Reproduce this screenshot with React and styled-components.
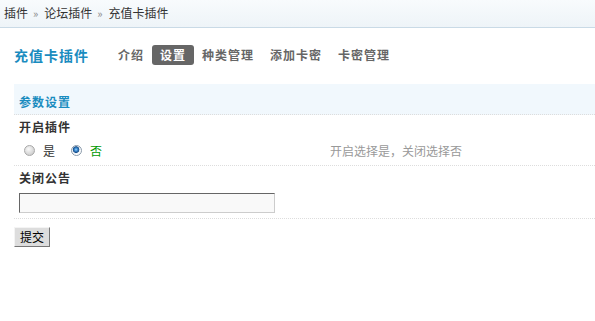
import React from "react";
import styled, { createGlobalStyle } from "styled-components";

const Global = createGlobalStyle`
  html, body { margin: 0; padding: 0; background: #fff; }
  body {
    font-family: "Noto Sans CJK SC", "Liberation Sans", sans-serif;
    font-size: 12px;
    color: #333;
  }
`;

const TopBar = styled.div`
  height: 27px;
  line-height: 26px;
  padding-left: 4px;
  background: linear-gradient(#f8fbfd, #eef4f8);
  border-bottom: 1px solid #c9dae6;
  color: #333;
  font-size: 12px;
`;

const Sep = styled.span`
  color: #888;
  margin: 0 6px 0 5px;
  font-size: 11px;
`;

const Header = styled.div`
  display: flex;
  align-items: center;
  margin: 17px 0 0 14px;
  height: 20px;
`;

const Title = styled.h3`
  margin: 0 21px 0 0;
  font-size: 14px;
  font-weight: 700;
  letter-spacing: 1px;
  color: #1a8cbf;
  line-height: 20px;
`;

const Nav = styled.div`
  display: flex;
  gap: 0;
`;

const NavItem = styled.a`
  display: block;
  height: 20px;
  line-height: 20px;
  padding: 0 8px;
  border-radius: 3px;
  font-size: 12px;
  font-weight: 700;
  letter-spacing: 1px;
  text-decoration: none;
  color: ${(p) => (p.$active ? "#fff" : "#666")};
  background: ${(p) => (p.$active ? "#666" : "transparent")};
`;

const Form = styled.div`
  margin: 19px 0 0 14px;
`;

const Partition = styled.div`
  background: #f1f8fd;
  color: #1a8cbf;
  font-weight: 700;
  letter-spacing: 1px;
  padding: 10px 5px 5px;
  line-height: 15px;
  border-bottom: 1px dotted #ddd;
`;

const ItemTitle = styled.div`
  padding: 3px 5px 0;
  line-height: 18px;
  font-weight: 700;
  letter-spacing: 1px;
  color: #333;
`;

const Row = styled.div`
  display: grid;
  grid-template-columns: 311px 1fr;
  align-items: center;
  border-bottom: 1px dotted #ddd;
  padding: ${(p) => p.$pad || "2px 0"};
`;

const Cell = styled.div`
  padding: 0 5px;
  display: flex;
  align-items: center;
  min-height: 20px;
`;

const Tip = styled.div`
  padding: 2px 5px 0;
  color: #999;
  line-height: 18px;
`;

const Choice = styled.label`
  display: inline-flex;
  align-items: center;
  margin-right: 11px;
  color: ${(p) => (p.$on ? "#090" : "#333")};
`;

const Radio = styled.span`
  width: 11px;
  height: 11px;
  box-sizing: border-box;
  margin: 0 8px 0 5px;
  border-radius: 50%;
  border: 1px solid ${(p) => (p.$checked ? "#8a9aaa" : "#a8a8a8")};
  background: ${(p) =>
    p.$checked
      ? "radial-gradient(circle at 45% 40%, #9fd4ff 0, #3a8ad0 1.5px, #1a4f8a 3px, #e8eef4 3.6px, #ffffff 5px)"
      : "radial-gradient(circle at 40% 35%, #fafafa 0, #e4e4e4 3px, #cfcfcf 6px)"};
`;

const TextInput = styled.input`
  width: 256px;
  height: 20px;
  box-sizing: border-box;
  margin: 0;
  padding: 1px 3px;
  background: #f9f9f9;
  border: 1px solid #ccc;
  border-top-color: #666;
  border-left-color: #666;
  font-family: inherit;
  font-size: 12px;
  outline: none;
`;

const Submit = styled.button`
  margin-top: 8px;
  height: 20px;
  padding: 0 5px;
  font-family: inherit;
  font-size: 12px;
  line-height: 16px;
  color: #000;
  background: #ddd;
  border: 1px solid;
  border-color: #f4f4f4 #777 #777 #f4f4f4;
  cursor: pointer;
`;

export default function App() {
  return (
    <>
      <Global />
      <TopBar>
        插件<Sep>»</Sep>论坛插件<Sep>»</Sep>充值卡插件
      </TopBar>
      <Header>
        <Title>充值卡插件</Title>
        <Nav>
          <NavItem>介绍</NavItem>
          <NavItem $active>设置</NavItem>
          <NavItem>种类管理</NavItem>
          <NavItem>添加卡密</NavItem>
          <NavItem>卡密管理</NavItem>
        </Nav>
      </Header>
      <Form>
        <Partition>参数设置</Partition>
        <ItemTitle>开启插件</ItemTitle>
        <Row $pad="4px 0 5px">
          <Cell>
            <Choice>
              <Radio />是
            </Choice>
            <Choice $on>
              <Radio $checked />否
            </Choice>
          </Cell>
          <Tip>开启选择是，关闭选择否</Tip>
        </Row>
        <ItemTitle>关闭公告</ItemTitle>
        <Row $pad="6px 0 5px">
          <Cell>
            <TextInput type="text" />
          </Cell>
          <div />
        </Row>
        <Submit>提交</Submit>
      </Form>
    </>
  );
}
